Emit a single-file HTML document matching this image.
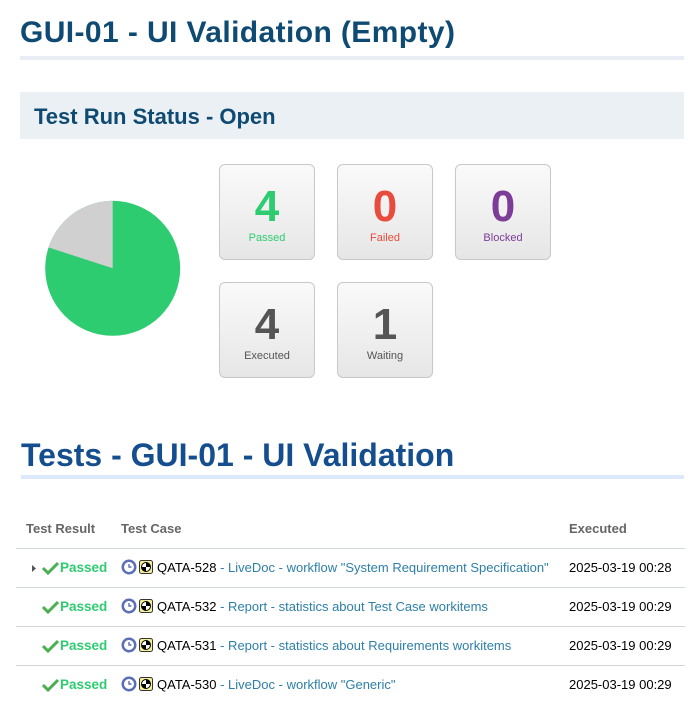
<!DOCTYPE html>
<html><head><meta charset="utf-8"><style>
body{margin:0;width:699px;height:720px;background:#fff;position:relative;overflow:hidden;font-family:"Liberation Sans",sans-serif;}
.a{position:absolute;white-space:nowrap}
h1{margin:0;position:absolute;font-weight:bold;white-space:nowrap}
.box{position:absolute;width:94px;height:94px;border:1px solid #c8c8c8;border-radius:6px;background:linear-gradient(#fafafa,#e6e6e6);text-align:center}
.box .n{font-size:44px;font-weight:bold;margin-top:20px;line-height:44px}
.box .l{font-size:11px;margin-top:3px}
.line{position:absolute;left:16px;width:669px;height:1px;background:#d3d6d9}
.th{position:absolute;top:521px;font-size:13px;font-weight:bold;color:#666}
.row{position:absolute;left:0;width:699px;height:20px;font-size:13px}
.pass{position:absolute;left:60px;top:0;color:#2ecc71;font-weight:bold;font-size:13.5px}
.chk{position:absolute;left:42px;top:1px}
.ic{position:absolute;left:121px;top:-1px}
.tc{position:absolute;left:157px;top:0;color:#000}
.tc span{color:#2d7fa8}
.dt{position:absolute;left:569px;top:0;color:#000}
</style></head><body>
<h1 style="left:20px;top:16px;font-size:30px;color:#0f4a72;letter-spacing:0.4px">GUI-01 - UI Validation (Empty)</h1>
<div class="a" style="left:20px;top:56px;width:664px;height:4px;background:#e8eef3"></div>
<div class="a" style="left:20px;top:92px;width:664px;height:47px;background:#ebf0f4"></div>
<h1 style="left:34px;top:104px;font-size:22px;color:#0f4a72">Test Run Status - Open</h1>
<svg class="a" style="left:0;top:0" width="200" height="360"><circle cx="112.7" cy="268.3" r="67.5" fill="#2ecc71"/><path d="M112.7 268.3 L112.7 200.8 A67.5 67.5 0 0 0 48.5 247.4 Z" fill="#d0d0d0"/></svg>
<div class="box" style="left:219px;top:164px"><div class="n" style="color:#2ecc71">4</div><div class="l" style="color:#2ecc71">Passed</div></div>
<div class="box" style="left:337px;top:164px"><div class="n" style="color:#e74c3c">0</div><div class="l" style="color:#e74c3c">Failed</div></div>
<div class="box" style="left:455px;top:164px"><div class="n" style="color:#7d3c98">0</div><div class="l" style="color:#7d3c98">Blocked</div></div>
<div class="box" style="left:219px;top:282px"><div class="n" style="color:#555">4</div><div class="l" style="color:#555">Executed</div></div>
<div class="box" style="left:337px;top:282px"><div class="n" style="color:#555">1</div><div class="l" style="color:#555">Waiting</div></div>
<h1 style="left:21px;top:437px;font-size:32px;color:#154e8e">Tests - GUI-01 - UI Validation</h1>
<div class="a" style="left:21px;top:475px;width:663px;height:4px;background:#dbe9fa"></div>
<div class="th" style="left:26px">Test Result</div>
<div class="th" style="left:121px">Test Case</div>
<div class="th" style="left:569px">Executed</div>
<div class="line" style="top:548px"></div>
<div class="line" style="top:587px"></div>
<div class="line" style="top:626px"></div>
<div class="line" style="top:665px"></div>

<div class="row" style="top:560px"><svg class="a" style="left:31px;top:4px" width="6" height="9"><path d="M1 1 L5 4.5 L1 8Z" fill="#555"/></svg>
<svg class="chk" width="17" height="14"><path d="M1 7 L6 12 L16 2" stroke="#4caf50" stroke-width="3" fill="none"/></svg><span class="pass">Passed</span>
<svg class="ic" width="34" height="16"><circle cx="8" cy="8" r="7.5" fill="#5a6fb5"/><circle cx="8" cy="8" r="5" fill="#fff"/><path d="M8 5v3h2.5" stroke="#5a6fb5" stroke-width="1.4" fill="none"/><rect x="18.5" y="1.5" width="13" height="13" rx="2" fill="#f4f09a" stroke="#333"/><circle cx="25" cy="8" r="4.5" fill="#fff" stroke="#000"/><path d="M25 3.5A4.5 4.5 0 0 1 29.5 8H25ZM25 12.5A4.5 4.5 0 0 1 20.5 8H25Z" fill="#000"/></svg>
<span class="tc">QATA-528 <span>- LiveDoc - workflow "System Requirement Specification"</span></span><span class="dt">2025-03-19 00:28</span></div>

<div class="row" style="top:599px"><svg class="chk" width="17" height="14"><path d="M1 7 L6 12 L16 2" stroke="#4caf50" stroke-width="3" fill="none"/></svg><span class="pass">Passed</span>
<svg class="ic" width="34" height="16"><circle cx="8" cy="8" r="7.5" fill="#5a6fb5"/><circle cx="8" cy="8" r="5" fill="#fff"/><path d="M8 5v3h2.5" stroke="#5a6fb5" stroke-width="1.4" fill="none"/><rect x="18.5" y="1.5" width="13" height="13" rx="2" fill="#f4f09a" stroke="#333"/><circle cx="25" cy="8" r="4.5" fill="#fff" stroke="#000"/><path d="M25 3.5A4.5 4.5 0 0 1 29.5 8H25ZM25 12.5A4.5 4.5 0 0 1 20.5 8H25Z" fill="#000"/></svg>
<span class="tc">QATA-532 <span>- Report - statistics about Test Case workitems</span></span><span class="dt">2025-03-19 00:29</span></div>

<div class="row" style="top:638px"><svg class="chk" width="17" height="14"><path d="M1 7 L6 12 L16 2" stroke="#4caf50" stroke-width="3" fill="none"/></svg><span class="pass">Passed</span>
<svg class="ic" width="34" height="16"><circle cx="8" cy="8" r="7.5" fill="#5a6fb5"/><circle cx="8" cy="8" r="5" fill="#fff"/><path d="M8 5v3h2.5" stroke="#5a6fb5" stroke-width="1.4" fill="none"/><rect x="18.5" y="1.5" width="13" height="13" rx="2" fill="#f4f09a" stroke="#333"/><circle cx="25" cy="8" r="4.5" fill="#fff" stroke="#000"/><path d="M25 3.5A4.5 4.5 0 0 1 29.5 8H25ZM25 12.5A4.5 4.5 0 0 1 20.5 8H25Z" fill="#000"/></svg>
<span class="tc">QATA-531 <span>- Report - statistics about Requirements workitems</span></span><span class="dt">2025-03-19 00:29</span></div>

<div class="row" style="top:677px"><svg class="chk" width="17" height="14"><path d="M1 7 L6 12 L16 2" stroke="#4caf50" stroke-width="3" fill="none"/></svg><span class="pass">Passed</span>
<svg class="ic" width="34" height="16"><circle cx="8" cy="8" r="7.5" fill="#5a6fb5"/><circle cx="8" cy="8" r="5" fill="#fff"/><path d="M8 5v3h2.5" stroke="#5a6fb5" stroke-width="1.4" fill="none"/><rect x="18.5" y="1.5" width="13" height="13" rx="2" fill="#f4f09a" stroke="#333"/><circle cx="25" cy="8" r="4.5" fill="#fff" stroke="#000"/><path d="M25 3.5A4.5 4.5 0 0 1 29.5 8H25ZM25 12.5A4.5 4.5 0 0 1 20.5 8H25Z" fill="#000"/></svg>
<span class="tc">QATA-530 <span>- LiveDoc - workflow "Generic"</span></span><span class="dt">2025-03-19 00:29</span></div>
</body></html>
